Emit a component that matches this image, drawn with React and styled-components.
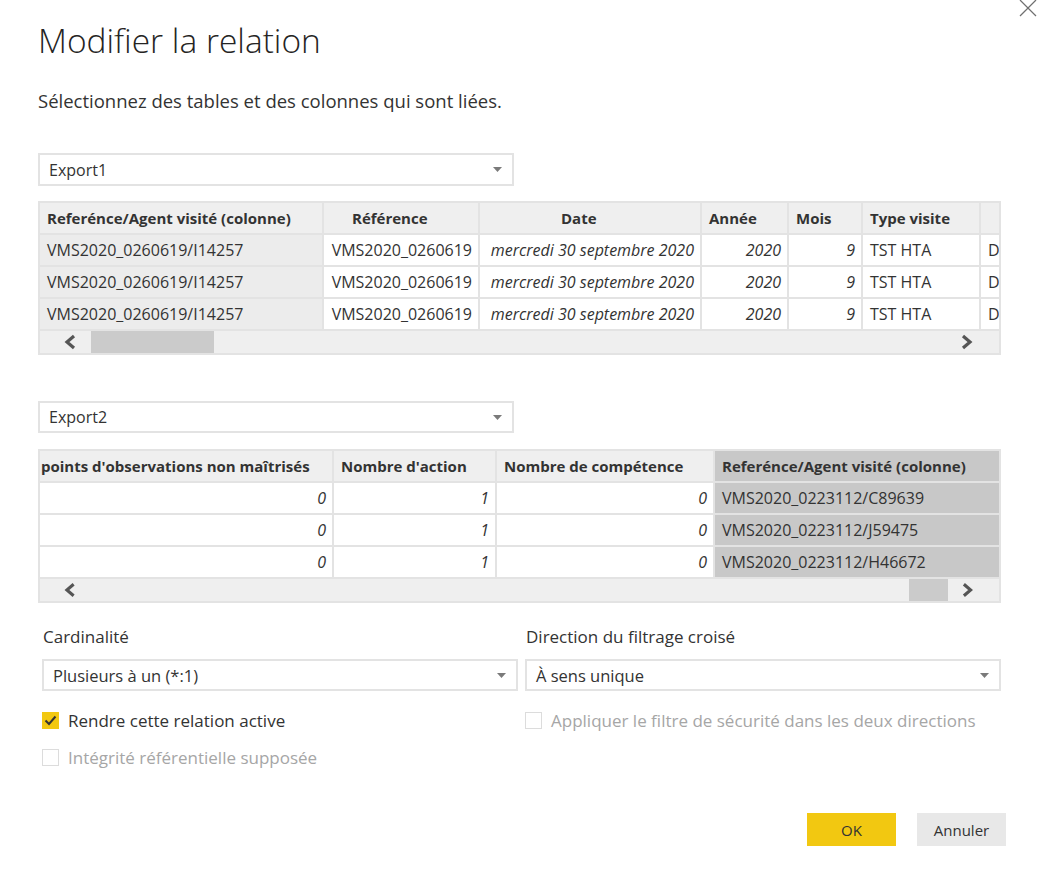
import React from "react";
import styled, { createGlobalStyle } from "styled-components";

const Global = createGlobalStyle`
  html, body { margin: 0; padding: 0; background: #ffffff; }
  body { font-family: "Open Sans", "Noto Sans", sans-serif; color: #333333; }
  * { box-sizing: border-box; }
`;

const Dialog = styled.div`
  position: relative;
  width: 1050px;
  height: 884px;
  padding: 18px 49px 0 38px;
  overflow: hidden;
  background: #fff;
`;

const CloseIcon = styled.svg`
  position: absolute;
  top: 0;
  left: 1019px;
  width: 18px;
  height: 18px;
`;

const Title = styled.h1`
  margin: 0;
  font-size: 33.5px;
  line-height: 44px;
  font-weight: 300;
  color: #252423;
`;

const Subtitle = styled.p`
  margin: 27px 0 0;
  font-size: 18.5px;
  line-height: 24px;
  color: #333;
`;

const Select = styled.div`
  display: flex;
  align-items: center;
  justify-content: space-between;
  width: 476px;
  height: ${(p) => p.$h || 33}px;
  margin-top: ${(p) => p.$mt || 0}px;
  padding: 0 10px 0 9px;
  border: 2px solid #e3e3e3;
  background: #fff;
  font-size: ${(p) => p.$fs || 16}px;
  color: #333;
`;

const Caret = () => (
  <svg width="9" height="5" viewBox="0 0 9 5">
    <polygon points="0,0 9,0 4.5,5" fill="#7a7a7a" />
  </svg>
);

const Table = styled.div`
  display: grid;
  grid-template-columns: ${(p) => p.$cols};
  grid-template-rows: 30px 30px 30px 30px 22px;
  gap: 2px;
  margin-top: ${(p) => p.$mt}px;
  width: 963px;
  border: 2px solid #e3e3e3;
  background: #e3e3e3;
  font-size: 16px;
`;

const HeadCell = styled.div`
  display: flex;
  align-items: center;
  padding: 0 4px 0 ${(p) => p.$pad ?? 7}px;
  background: ${(p) => (p.$sel ? "#c8c8c8" : "#efefef")};
  font-weight: 700;
  font-size: 15px;
  color: #333;
  white-space: nowrap;
  overflow: hidden;
`;

const Cell = styled.div`
  display: flex;
  align-items: center;
  justify-content: ${(p) => (p.$num ? "flex-end" : "flex-start")};
  padding: 0 6px 0 7px;
  background: ${(p) =>
    p.$tone === "sel" ? "#c8c8c8" : p.$tone === "key" ? "#ececec" : "#ffffff"};
  font-style: ${(p) => (p.$it ? "italic" : "normal")};
  color: #333;
  white-space: nowrap;
  overflow: hidden;
`;

const ScrollRow = styled.div`
  grid-column: 1 / -1;
  display: flex;
  align-items: center;
  height: 22px;
  padding: 0 26px 0 24px;
  background: #efefef;
`;

const Track = styled.div`
  flex: 1;
  height: 22px;
  margin: 0 13px 0 14px;
  display: flex;
`;

const Thumb = styled.div`
  margin-left: ${(p) => p.$start}px;
  width: ${(p) => p.$size}px;
  height: 22px;
  background: #cbcbcb;
`;

const Chevron = ({ dir }) => (
  <svg width="13" height="16" viewBox="0 0 13 16">
    <polyline
      points={dir === "left" ? "10,2 3,8 10,14" : "3,2 10,8 3,14"}
      fill="none"
      stroke="#555"
      strokeWidth="3.2"
    />
  </svg>
);

const Scrollbar = ({ start, size }) => (
  <ScrollRow>
    <Chevron dir="left" />
    <Track>
      <Thumb $start={start} $size={size} />
    </Track>
    <Chevron dir="right" />
  </ScrollRow>
);

const Options = styled.div`
  display: grid;
  grid-template-columns: 476px 476px;
  column-gap: 7px;
  margin: 23px 0 0 4px;
`;

const Column = styled.div`
  display: flex;
  flex-direction: column;
`;

const Label = styled.div`
  font-size: 17px;
  line-height: 22px;
  color: #333;
  padding-left: 1px;
  margin-bottom: 11px;
`;

const Check = styled.label`
  display: flex;
  align-items: center;
  gap: 9px;
  height: 24px;
  margin-top: ${(p) => p.$mt}px;
  font-size: 17px;
  color: ${(p) => (p.$disabled ? "#a6a6a6" : "#333")};
`;

const Box = styled.span`
  display: flex;
  align-items: center;
  justify-content: center;
  width: 17px;
  height: 17px;
  border: 1px solid ${(p) => (p.$on ? "#f2c811" : "#dcdcdc")};
  background: ${(p) => (p.$on ? "#f2c811" : "#fff")};
`;

const Footer = styled.div`
  display: flex;
  justify-content: flex-end;
  gap: 21px;
  margin: 44px -5px 0 0;
`;

const Button = styled.button`
  width: 89px;
  height: 33px;
  border: none;
  font-family: inherit;
  font-size: 15px;
  color: #333;
  background: ${(p) => (p.$primary ? "#f2c811" : "#e8e8e8")};
`;

const rows1 = [0, 1, 2];

export default function App() {
  return (
    <>
      <Global />
      <Dialog>
        <CloseIcon viewBox="0 0 18 18">
          <line x1="1" y1="0" x2="17" y2="16" stroke="#707070" strokeWidth="1.2" />
          <line x1="17" y1="0" x2="1" y2="16" stroke="#707070" strokeWidth="1.2" />
        </CloseIcon>
        <Title>Modifier la relation</Title>
        <Subtitle>Sélectionnez des tables et des colonnes qui sont liées.</Subtitle>

        <Select $mt={40}>
          <span>Export1</span>
          <Caret />
        </Select>

        <Table $mt={15} $cols="282px 154px 220px 85px 72px 116px 1fr">
          <HeadCell>Referénce/Agent visité (colonne)</HeadCell>
          <HeadCell $pad={28}>Référence</HeadCell>
          <HeadCell $pad={81}>Date</HeadCell>
          <HeadCell>Année</HeadCell>
          <HeadCell>Mois</HeadCell>
          <HeadCell>Type visite</HeadCell>
          <HeadCell />
          {rows1.map((i) => (
            <React.Fragment key={i}>
              <Cell $tone="key">VMS2020_0260619/I14257</Cell>
              <Cell $num>VMS2020_0260619</Cell>
              <Cell $it $num>mercredi 30 septembre 2020</Cell>
              <Cell $it $num>2020</Cell>
              <Cell $it $num>9</Cell>
              <Cell>TST HTA</Cell>
              <Cell>D</Cell>
            </React.Fragment>
          ))}
          <Scrollbar start={0} size={123} />
        </Table>

        <Select $mt={46} $h={32}>
          <span>Export2</span>
          <Caret />
        </Select>

        <Table $mt={16} $cols="292px 161px 216px 1fr">
          <HeadCell $pad={1}>points d'observations non maîtrisés</HeadCell>
          <HeadCell>Nombre d'action</HeadCell>
          <HeadCell>Nombre de compétence</HeadCell>
          <HeadCell $sel>Referénce/Agent visité (colonne)</HeadCell>
          {["C89639", "J59475", "H46672"].map((id) => (
            <React.Fragment key={id}>
              <Cell $it $num>0</Cell>
              <Cell $it $num>1</Cell>
              <Cell $it $num>0</Cell>
              <Cell $tone="sel">VMS2020_0223112/{id}</Cell>
            </React.Fragment>
          ))}
          <Scrollbar start={818} size={39} />
        </Table>

        <Options>
          <Column>
            <Label>Cardinalité</Label>
            <Select $h={32} $fs={16.5}>
              <span>Plusieurs à un (*:1)</span>
              <Caret />
            </Select>
            <Check $mt={17}>
              <Box $on>
                <svg width="13" height="11" viewBox="0 0 13 11">
                  <polyline points="1.5,5.5 5,9 11.5,1.5" fill="none" stroke="#333" strokeWidth="2" />
                </svg>
              </Box>
              Rendre cette relation active
            </Check>
            <Check $mt={13} $disabled>
              <Box />
              Intégrité référentielle supposée
            </Check>
          </Column>
          <Column>
            <Label>Direction du filtrage croisé</Label>
            <Select $h={32} $fs={16.5}>
              <span>À sens unique</span>
              <Caret />
            </Select>
            <Check $mt={17} $disabled>
              <Box />
              Appliquer le filtre de sécurité dans les deux directions
            </Check>
          </Column>
        </Options>

        <Footer>
          <Button $primary>OK</Button>
          <Button>Annuler</Button>
        </Footer>
      </Dialog>
    </>
  );
}
